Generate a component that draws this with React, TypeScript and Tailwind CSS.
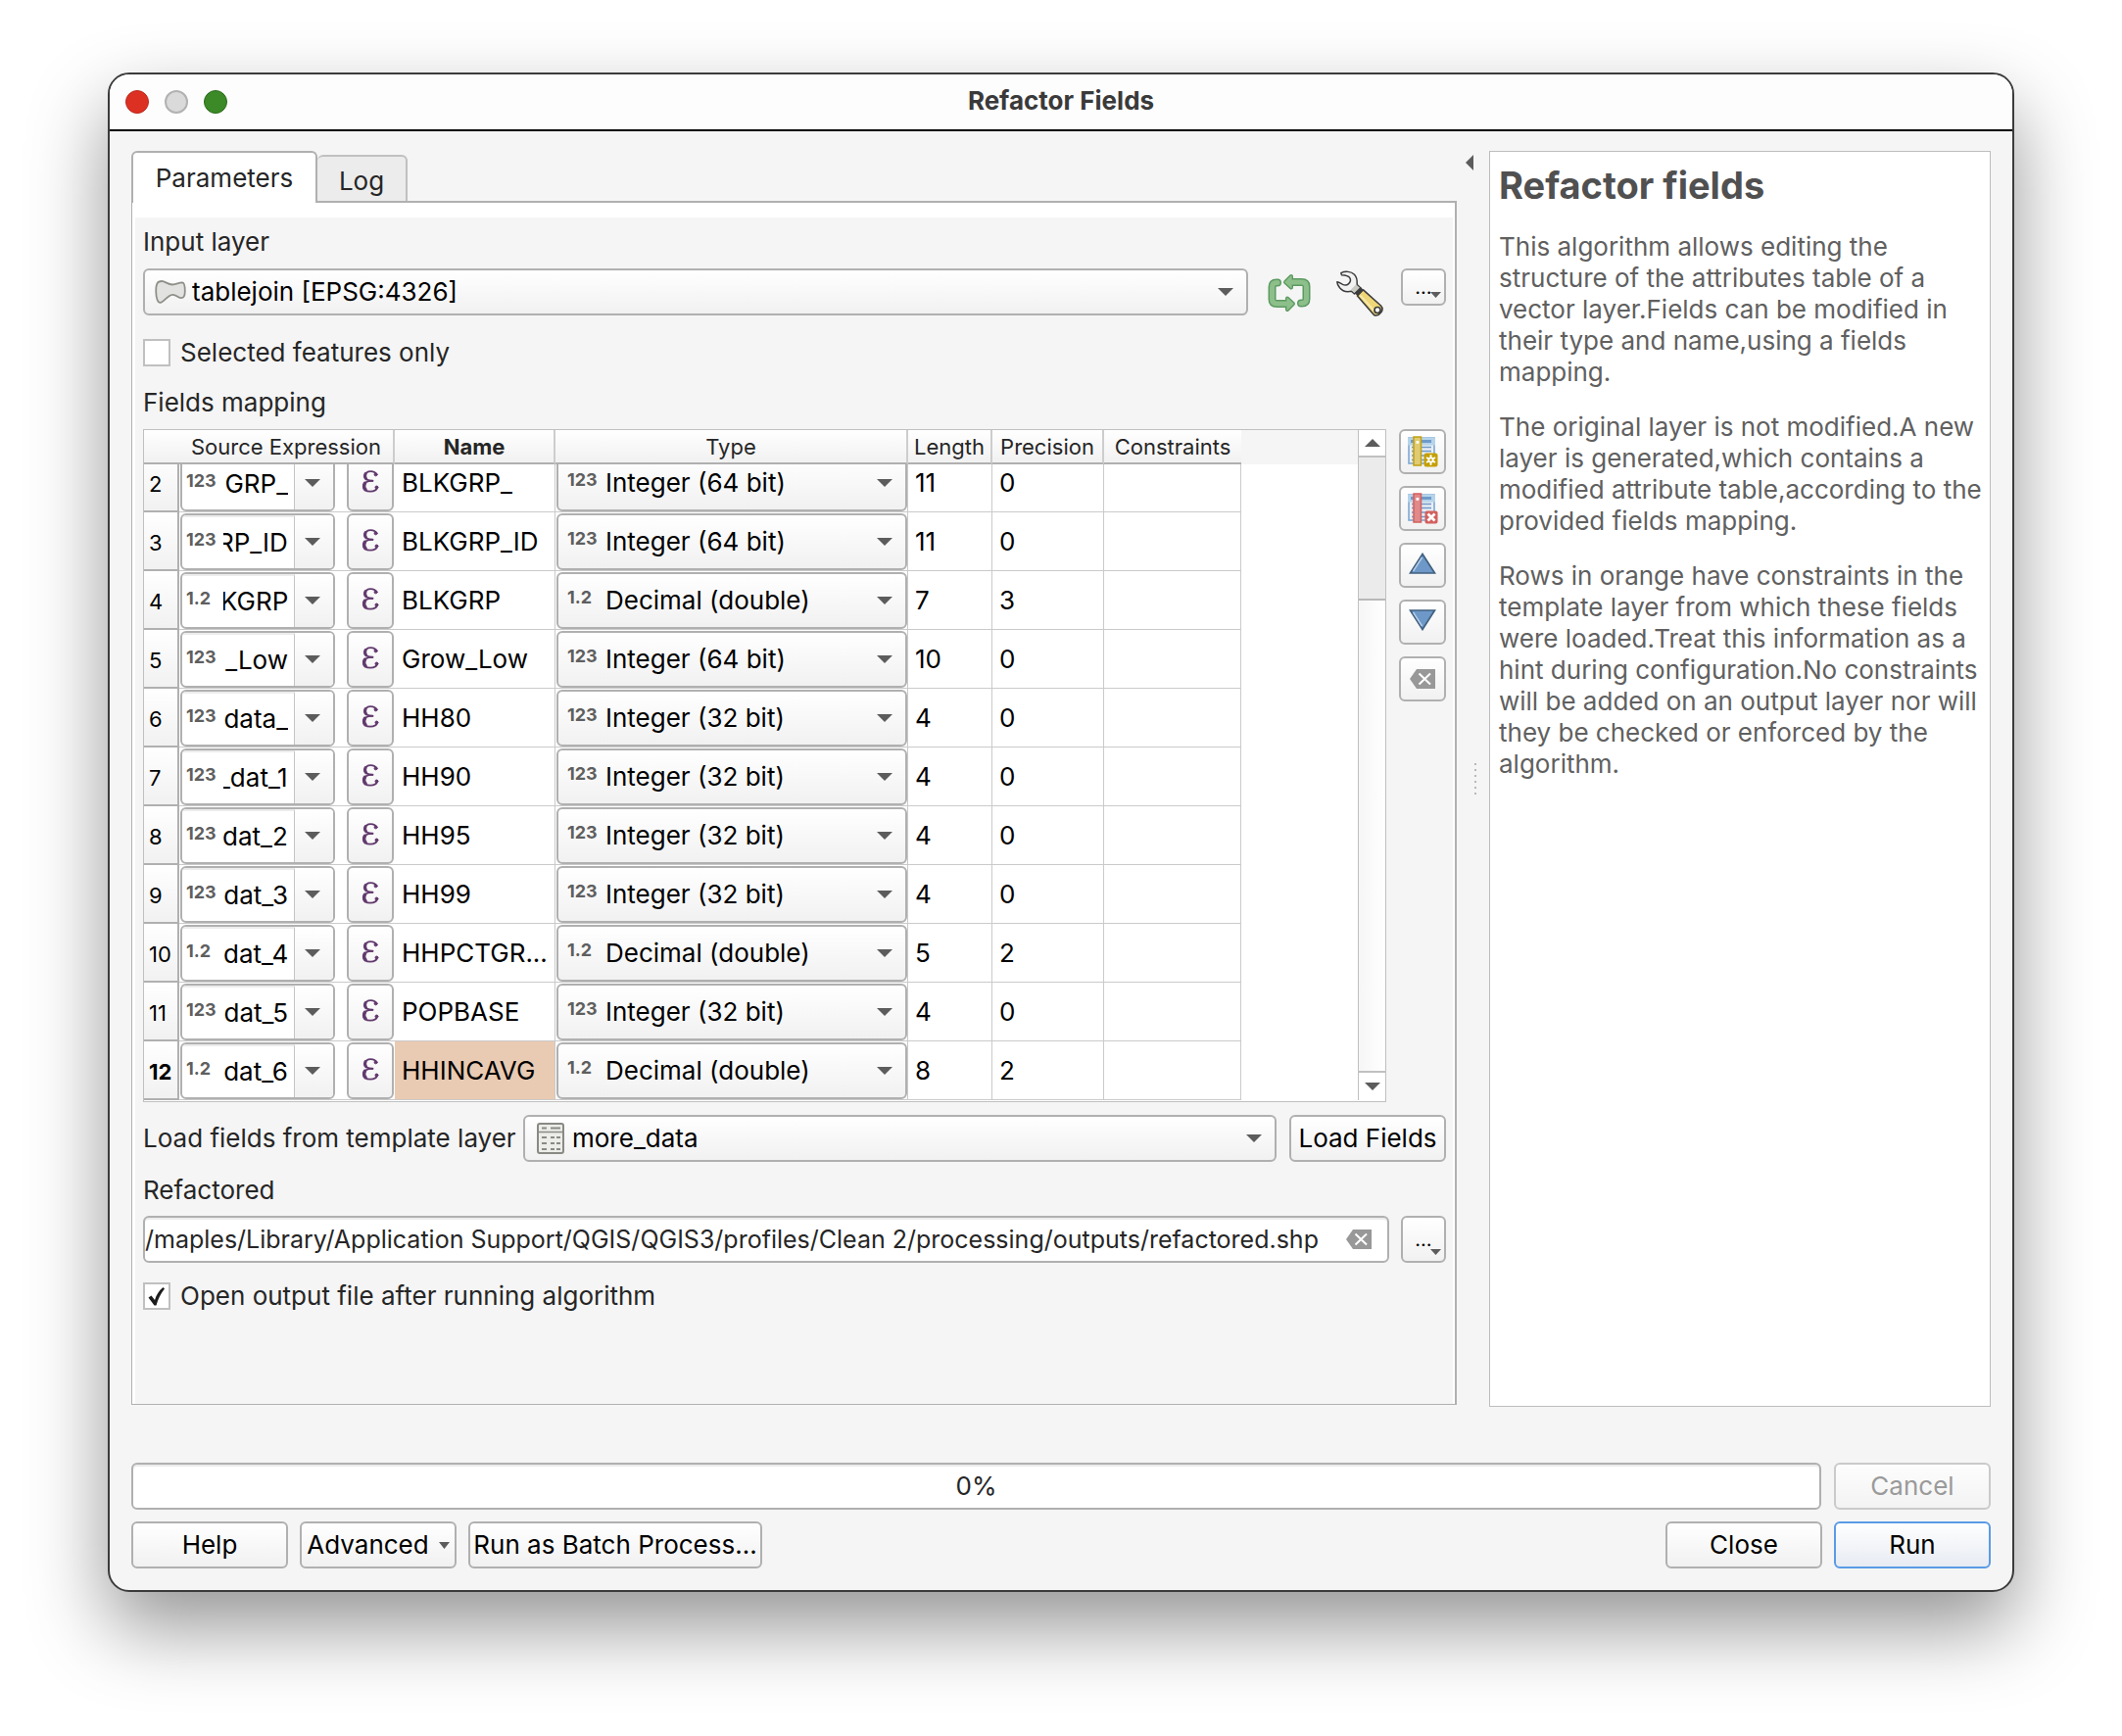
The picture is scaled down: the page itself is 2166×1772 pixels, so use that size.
import { useLayoutEffect, useRef, type ReactNode } from "react";

type Row = {
  n: number;
  kind: "123" | "1.2";
  source: string;
  name: string;
  type: string;
  length: string;
  precision: string;
  active?: boolean;
};

const INT64 = "Integer (64 bit)";
const INT32 = "Integer (32 bit)";
const DOUBLE = "Decimal (double)";

const rows: Row[] = [
  { n: 2, kind: "123", source: "GRP_", name: "BLKGRP_", type: INT64, length: "11", precision: "0" },
  { n: 3, kind: "123", source: "RP_ID", name: "BLKGRP_ID", type: INT64, length: "11", precision: "0" },
  { n: 4, kind: "1.2", source: "KGRP", name: "BLKGRP", type: DOUBLE, length: "7", precision: "3" },
  { n: 5, kind: "123", source: "_Low", name: "Grow_Low", type: INT64, length: "10", precision: "0" },
  { n: 6, kind: "123", source: "data_", name: "HH80", type: INT32, length: "4", precision: "0" },
  { n: 7, kind: "123", source: "_dat_1", name: "HH90", type: INT32, length: "4", precision: "0" },
  { n: 8, kind: "123", source: "dat_2", name: "HH95", type: INT32, length: "4", precision: "0" },
  { n: 9, kind: "123", source: "dat_3", name: "HH99", type: INT32, length: "4", precision: "0" },
  { n: 10, kind: "1.2", source: "dat_4", name: "HHPCTGR...", type: DOUBLE, length: "5", precision: "2" },
  { n: 11, kind: "123", source: "dat_5", name: "POPBASE", type: INT32, length: "4", precision: "0" },
  { n: 12, kind: "1.2", source: "dat_6", name: "HHINCAVG", type: DOUBLE, length: "8", precision: "2", active: true },
];

const box = "rounded-md border-2 border-[#b0b0b0] bg-linear-to-b from-white to-[#f1f1f1]";

function Arrow({ className = "h-2 w-4" }: { className?: string }) {
  return (
    <svg viewBox="0 0 16 8" preserveAspectRatio="none" className={`shrink-0 ${className}`} aria-hidden="true">
      <path d="M0 0H16L8 8Z" fill="#5c5c5c" />
    </svg>
  );
}

function PolygonIcon() {
  return (
    <svg viewBox="0 0 32 24" className="h-6 w-8 shrink-0" aria-hidden="true">
      <path
        d="M1.200 11C1.200 4 2.500 1 7 1C11 1 13 4.500 18 4.500C22 4.500 24 2.500 28 2.300C30.500 2.300 30.800 6 30.800 11C30.800 16 30 18.200 27 18.200C24 18.200 22 14.500 18 14.800C13 15.300 10.500 21 6.500 22.700C3 24 1.200 18 1.200 11Z"
        fill="#e2e2e0"
        stroke="#8f8f8a"
        strokeWidth="1.800"
      />
    </svg>
  );
}

function TableIcon() {
  return (
    <svg viewBox="0 0 28 32" className="h-8 w-7 shrink-0" fill="none" stroke="#8a8a85" aria-hidden="true">
      <rect x="1" y="1" width="26" height="30" rx="2" fill="#ecece9" strokeWidth="2" />
      <path d="M1 9.500H27" strokeWidth="1.500" />
      <path d="M5 5.500H10M14 5.500H24M5 15H10M14 15H18M20 15H24M5 21H10M14 21H18M20 21H24M5 27H10M14 27H18M20 27H24" strokeWidth="1.800" />
    </svg>
  );
}

function RefreshIcon() {
  const half = (
    <>
      <path d="M10 9.500H9Q4.500 9.500 4.500 14V26.500Q4.500 31 9.500 31H22" stroke="#5b9a60" strokeWidth="8" strokeLinejoin="round" strokeLinecap="round" />
      <path d="M20 25.500L26 31L20 37Z" fill="#5b9a60" stroke="#5b9a60" strokeWidth="4" strokeLinejoin="round" />
      <path d="M10 9.500H9Q4.500 9.500 4.500 14V26.500Q4.500 31 9.500 31H22" stroke="#8dbf8b" strokeWidth="5" strokeLinejoin="round" strokeLinecap="round" />
      <path d="M20 25.500L26 31L20 37Z" fill="#8dbf8b" stroke="#8dbf8b" strokeWidth="1.200" strokeLinejoin="round" />
    </>
  );
  return (
    <svg viewBox="0 0 44 40" className="h-10 w-11" fill="none" aria-hidden="true">
      {half}
      <g transform="rotate(180 22 20)">{half}</g>
    </svg>
  );
}

function WrenchIcon() {
  return (
    <svg viewBox="0 0 48 48" className="size-12" aria-hidden="true">
      <path
        d="M4.800 2.600C9 .6 15 .8 18.500 4.200C21.500 7.200 21.400 11 21.200 14.500L25.500 18.500L18.500 24L15.500 21.300C11 22.300 6 21 3.500 17.800C1.800 15.500 .8 13.500 .8 11.800C3 12 4.500 13.400 6.500 14.400C8.500 15.300 11 15.200 12.600 13.600C14.500 11.800 15 9.500 13.600 7.400C12 5.200 8.500 5 5.500 4.800Z"
        fill="#f2f2f2"
        stroke="#3c3c3c"
        strokeWidth="1.500"
        strokeLinejoin="round"
      />
      <path d="M15 19.500L20 14.500L24 18L18.500 23Z" fill="#c9c9c4" />
      <path d="M24.500 17L27.500 19.800L21.500 26L18.500 23Z" fill="#3c3c3c" />
      <path
        d="M27.500 19.800L45.500 36Q48.500 39.500 45.500 43Q42.500 47.200 38.500 45.500L21.500 26Z"
        fill="#efd779"
        stroke="#3c3c3c"
        strokeWidth="1.600"
        strokeLinejoin="round"
      />
      <path d="M24.500 25.500L39 41.500" stroke="#f8eab0" strokeWidth="1.800" />
      <circle cx="42" cy="40.500" r="3" fill="#fff" stroke="#3c3c3c" strokeWidth="1.700" />
    </svg>
  );
}

function FieldIcon({ ruler, edge, children }: { ruler: string; edge: string; children: ReactNode }) {
  return (
    <svg viewBox="0 0 31 32" className="h-8 w-[31px]" aria-hidden="true">
      <rect x="1" y="2" width="26" height="26" fill="#e9edf3" stroke="#7fa8d4" strokeWidth="1.600" />
      <rect x="0" y="1.500" width="28" height="8" fill="#b5d4ea" />
      <path d="M3 5.500H24" stroke="#6f9bcb" strokeWidth="3" />
      <path d="M4 11.500H24M4 15.500H24M4 20H24M4 24.500H24" stroke="#6f9bcb" strokeWidth="1.300" />
      <rect x="6" y="1" width="7.500" height="29" fill={ruler} stroke={edge} strokeWidth="1.500" />
      <rect x="8.500" y="5" width="2.800" height="2.800" fill="#fff" />
      {children}
    </svg>
  );
}

function AddFieldIcon() {
  return (
    <FieldIcon ruler="#e0cb72" edge="#c0a010">
      <rect x="16.500" y="17.500" width="14" height="14" rx="2.500" fill="#c4a000" />
      <path d="M23.500 19.300V29.700M19 22L28 27M19 27L28 22" stroke="#fff" strokeWidth="1.900" />
      <circle cx="23.500" cy="24.500" r="3" fill="#fff" />
      <circle cx="23.500" cy="24.500" r="1.200" fill="#c4a000" />
    </FieldIcon>
  );
}

function RemoveFieldIcon() {
  return (
    <FieldIcon ruler="#e08a8a" edge="#d35f5f">
      <rect x="17.500" y="18.500" width="13" height="13" rx="2" fill="#d35f5f" />
      <path d="M20.500 21.500L27.500 28.500M27.500 21.500L20.500 28.500" stroke="#fff" strokeWidth="2.800" />
    </FieldIcon>
  );
}

function TriangleIcon({ down = false }: { down?: boolean }) {
  return (
    <svg viewBox="0 0 28 22" className="mb-1 h-[22px] w-7" aria-hidden="true">
      <path
        d={down ? "M1.500 1H26.500L14 20.500Z" : "M1.500 21H26.500L14 1.500Z"}
        fill="#6d98c8"
        stroke="#40607f"
        strokeWidth="1.700"
      />
      <path d={down ? "M4.500 3L13.500 17" : "M4.500 19L13.500 5"} stroke="#b6cfe8" strokeWidth="1.400" />
    </svg>
  );
}

function ClearIcon() {
  return (
    <svg viewBox="0 0 26 20" className="h-5 w-[26px]" aria-hidden="true">
      <path d="M0 10L7 0H26V20H7Z" fill="#989898" />
      <path d="M9.500 4.500L21 15.500M21 4.500L9.500 15.500" stroke="#fff" strokeWidth="2" />
    </svg>
  );
}

function EpsilonIcon() {
  return (
    <svg viewBox="0 0 18 24" className="mb-1 h-[23px] w-[18px]" fill="none" stroke="#623a6e" strokeLinecap="round" aria-hidden="true">
      <path d="M15.500 4.500C14.500 2 12 1.200 9.500 1.200C6 1.200 3 3 3 6.300C3 9.500 6 11.200 11.500 11.200" strokeWidth="1.900" />
      <path d="M11.500 11.300C5 11.300 1.800 13.500 1.800 17C1.800 20.800 5 22.600 9 22.600C12.500 22.600 15.800 21.500 16.500 18" strokeWidth="1.900" />
      <path d="M3.900 3.800C3.100 5.500 3.200 7.600 4.400 9" strokeWidth="3.200" />
      <path d="M3.200 14C2.100 16 2.300 18.800 3.700 20.500" strokeWidth="3.600" />
      <circle cx="14.800" cy="4.500" r="1.600" fill="#623a6e" />
      <circle cx="15.700" cy="18.200" r="1.500" fill="#623a6e" />
    </svg>
  );
}

function KindTag({ kind, className }: { kind: string; className: string }) {
  return <span className={`shrink-0 pb-1.5 text-[18px] leading-6 font-bold text-[#5f5f5f] ${className}`}>{kind}</span>;
}

function SourceCell({ row }: { row: Row }) {
  const input = useRef<HTMLInputElement>(null);
  useLayoutEffect(() => {
    if (input.current) input.current.scrollLeft = input.current.scrollWidth;
  }, []);
  return (
    <div className="flex gap-3 pl-px">
      <div className="flex h-[58px] w-[158px] overflow-hidden rounded-md border-2 border-[#b0b0b0] bg-white">
        <div className="flex w-[115px] items-center border-t-2 border-r border-t-[#ececec] border-r-[#c4c4c4] pr-1.5 pl-1">
          <KindTag kind={row.kind} className="w-[38px]" />
          <input
            ref={input}
            aria-label={`Source expression ${row.n}`}
            defaultValue={row.source}
            className="w-full min-w-0 text-right text-[26px] leading-8 text-black outline-none"
          />
        </div>
        <button
          type="button"
          aria-label="Choose source field"
          className="flex flex-1 items-center justify-center bg-linear-to-b from-white to-[#f1f1f1] pr-1"
        >
          <Arrow />
        </button>
      </div>
      <button type="button" aria-label="Expression editor" className={`flex h-[58px] w-12 items-center justify-center ${box}`}>
        <EpsilonIcon />
      </button>
    </div>
  );
}

function FieldsTable() {
  const view = useRef<HTMLDivElement>(null);
  useLayoutEffect(() => {
    if (view.current) view.current.scrollTop = 11;
  }, []);
  const th =
    "sticky top-0 z-10 h-[35px] border-b-2 border-b-[#b0b0b0] bg-linear-to-b from-white to-[#f1f1f1] p-0 text-center text-[22px] leading-7 font-normal text-[#262626]";
  const thLine = "border-r-2 border-r-[#cdcdcd]";
  const td = "h-[60px] border-r border-b border-[#cacaca] p-0 pl-[7px] text-left text-[26px] leading-8 text-black";
  return (
    <div className="flex min-w-0 flex-1 border border-[#c0c0c0] bg-white pb-px">
      <div ref={view} className="h-[684px] min-w-0 flex-1 overflow-hidden bg-white">
        <table className="w-full table-fixed border-separate border-spacing-0">
          <colgroup>
            <col className="w-9" />
            <col className="w-[220px]" />
            <col className="w-[164px]" />
            <col className="w-[360px]" />
            <col className="w-[86px]" />
            <col className="w-[114px]" />
            <col className="w-[140px]" />
            <col />
          </colgroup>
          <thead>
            <tr>
              <td className={th} />
              <th scope="col" className={`${th} ${thLine}`}>Source Expression</th>
              <th scope="col" className={`${th} ${thLine}`}><b className="font-bold">Name</b></th>
              <th scope="col" className={`${th} ${thLine}`}>Type</th>
              <th scope="col" className={`${th} ${thLine}`}>Length</th>
              <th scope="col" className={`${th} ${thLine}`}>Precision</th>
              <th scope="col" className={th}>Constraints</th>
              <td className="sticky top-0 z-10 bg-[#f5f5f5] p-0" />
            </tr>
          </thead>
          <tbody>
            {rows.map((row) => (
              <tr key={row.n}>
                <th
                  scope="row"
                  className={`h-[60px] border-r-2 border-b-2 border-[#b0b0b0] bg-linear-to-b from-white to-[#f1f1f1] p-0 pt-1 pl-[5px] text-left text-[22px] leading-7 text-black ${row.active ? "font-bold" : "font-normal"}`}
                >
                  {row.n}
                </th>
                <td className="h-[60px] border-b border-[#cacaca] p-0 pt-px align-top">
                  <SourceCell row={row} />
                </td>
                <td className={`${td} ${row.active ? "bg-[#e9cab2]" : ""}`}>{row.name}</td>
                <td className="h-[60px] border-r border-b border-[#cacaca] p-0 pt-px pl-px align-top">
                  <div className={`flex h-[58px] items-center pr-[13px] pl-[9px] ${box}`}>
                    <KindTag kind={row.kind} className="w-[39px]" />
                    <select
                      aria-label={`Type of ${row.name}`}
                      className="min-w-0 flex-1 appearance-none text-[26px] leading-8 text-black outline-none"
                    >
                      <option>{row.type}</option>
                    </select>
                    <Arrow />
                  </div>
                </td>
                <td className={td}>{row.length}</td>
                <td className={td}>{row.precision}</td>
                <td className={td} />
                <td className="p-0" />
              </tr>
            ))}
          </tbody>
        </table>
      </div>
      <div className="flex w-7 flex-col border-l border-[#c0c0c0] bg-linear-to-r from-[#f6f6f6] to-white">
        <button type="button" aria-label="Scroll up" className="flex h-7 items-center justify-center border-b-2 border-[#c0c0c0] bg-white">
          <Arrow className="h-2 w-4 rotate-180" />
        </button>
        <div className="h-[146px] border-b-2 border-[#b8b8b8] bg-[#ebebeb]" />
        <div className="flex-1" />
        <button type="button" aria-label="Scroll down" className="flex h-[30px] items-center justify-center border-t-2 border-[#c0c0c0] bg-white">
          <Arrow />
        </button>
      </div>
    </div>
  );
}

function SideButton({ label, children }: { label: string; children: ReactNode }) {
  return (
    <button type="button" aria-label={label} className={`flex h-[46px] w-12 items-center justify-center ${box}`}>
      {children}
    </button>
  );
}

function PushButton({ className, children }: { className: string; children: ReactNode }) {
  return (
    <button
      type="button"
      className={`flex h-12 shrink-0 items-center justify-center whitespace-nowrap text-[26px] leading-8 text-black ${className}`}
    >
      {children}
    </button>
  );
}

function CheckRow({ id, label, checked, className }: { id: string; label: string; checked: boolean; className: string }) {
  return (
    <div className={`flex h-7 items-center gap-2.5 ${className}`}>
      <span className="relative flex size-7">
        <input
          id={id}
          type="checkbox"
          defaultChecked={checked}
          className="peer size-7 appearance-none border-2 border-[#c0c0c0] bg-white"
        />
        <svg viewBox="0 0 28 28" className="pointer-events-none absolute inset-0 hidden size-7 peer-checked:block" aria-hidden="true">
          <path d="M5.500 15.500L8.500 13.500L12 18C13.500 13 16 8.500 20.500 5L22 6.500C18 11.500 15.500 16.500 13.500 23.500H11.500Z" fill="#1c1c1c" />
        </svg>
      </span>
      <label htmlFor={id} className="text-[26px] leading-8">{label}</label>
    </div>
  );
}

export default function App() {
  return (
    <div className="min-h-screen bg-white px-[110px] pt-[74px] pb-[146px] font-[Inter,sans-serif] text-[26px] leading-8 text-[#262626]">
      <main className="overflow-hidden rounded-[22px] border-2 border-[#3b3b3b] bg-[#f5f5f5] shadow-[0_36px_80px_rgba(0,0,0,0.42)]">
        <header className="grid h-[58px] grid-cols-[1fr_auto_1fr] items-center border-b-2 border-black bg-[#fdfdfd] px-4">
          <div className="flex gap-4">
            <button type="button" aria-label="Close window" className="size-6 rounded-full border border-[#b92a1e] bg-[#dc3022]" />
            <button type="button" aria-label="Minimize window" className="size-6 rounded-full border-2 border-[#b2b2b2] bg-[#dadada]" />
            <button type="button" aria-label="Zoom window" className="size-6 rounded-full border border-[#2c6a1b] bg-[#3c8927]" />
          </div>
          <h1 className="pb-0.5 text-[26px] leading-8 font-bold text-[#3a3a3a]">Refactor Fields</h1>
        </header>

        <div className="px-[22px] pt-5 pb-[22px]">
          <div className="flex">
            <section className="flex min-w-0 flex-1 flex-col pb-[2px]">
              <div role="tablist" className="relative z-10 -mb-[2px] flex items-end">
                <button
                  type="button"
                  role="tab"
                  aria-selected="true"
                  className="h-[53px] w-[190px] rounded-t-md border-2 border-b-0 border-[#b0b0b0] bg-white text-[26px] leading-8"
                >
                  Parameters
                </button>
                <button
                  type="button"
                  role="tab"
                  aria-selected="false"
                  className="mb-[2px] h-[47px] w-[92px] rounded-t-md border-2 border-b-0 border-l-0 border-[#c0c0c0] bg-[#ececec] pt-1 text-[26px] leading-8"
                >
                  Log
                </button>
              </div>

              <div role="tabpanel" className="flex-1 border border-t-2 border-r-2 border-[#b0b0b0] bg-white pt-[15px] pr-[2px] pl-[3px]">
                <div className="bg-[#f5f5f5] pt-[9px] pr-[7px] pb-24 pl-2">
                  <label htmlFor="input-layer" className="block">Input layer</label>
                  <div className="mt-[11px] flex h-12 items-start">
                    <div className={`flex h-12 min-w-0 flex-1 items-center pr-[13px] pl-2.5 ${box}`}>
                      <PolygonIcon />
                      <select id="input-layer" className="ml-1.5 min-w-0 flex-1 appearance-none text-[26px] leading-8 text-black outline-none">
                        <option>tablejoin [EPSG:4326]</option>
                      </select>
                      <Arrow />
                    </div>
                    <button type="button" aria-label="Iterate over this layer" className="mt-[5px] ml-5"><RefreshIcon /></button>
                    <button type="button" aria-label="Advanced options" className="mt-[2px] ml-[26px]"><WrenchIcon /></button>
                    <button type="button" aria-label="Browse input" className={`relative ml-[18px] h-[38px] w-[46px] text-[20px] leading-8 text-black ${box}`}>
                      …
                      <Arrow className="absolute right-[3px] bottom-[6px] h-[6px] w-[11px]" />
                    </button>
                  </div>

                  <CheckRow id="selected-only" label="Selected features only" checked={false} className="mt-6" />

                  <h2 className="mt-[21px]">Fields mapping</h2>
                  <div className="mt-[11px] flex gap-[13px]">
                    <FieldsTable />
                    <div className="flex flex-col gap-3">
                      <SideButton label="Add new field"><AddFieldIcon /></SideButton>
                      <SideButton label="Delete selected field"><RemoveFieldIcon /></SideButton>
                      <SideButton label="Move field up"><TriangleIcon /></SideButton>
                      <SideButton label="Move field down"><TriangleIcon down /></SideButton>
                      <SideButton label="Reset all fields"><ClearIcon /></SideButton>
                    </div>
                  </div>

                  <div className="mt-[13px] flex items-center">
                    <label htmlFor="template-layer" className="w-[388px] shrink-0 whitespace-nowrap text-[26px]">
                      Load fields from template layer
                    </label>
                    <div className={`flex h-12 min-w-0 flex-1 items-center pr-[13px] pl-3 ${box}`}>
                      <TableIcon />
                      <select id="template-layer" className="ml-2 min-w-0 flex-1 appearance-none text-[26px] leading-8 text-black outline-none">
                        <option>more_data</option>
                      </select>
                      <Arrow />
                    </div>
                    <PushButton className={`ml-[13px] w-40 ${box}`}>Load Fields</PushButton>
                  </div>

                  <label htmlFor="output-path" className="mt-[13px] block">Refactored</label>
                  <div className="mt-2.5 flex gap-3">
                    <div className="flex h-12 min-w-0 flex-1 items-center rounded-md border-2 border-[#b0b0b0] bg-white pr-4 shadow-[inset_0_2px_0_#ececec]">
                      <input
                        id="output-path"
                        defaultValue="/maples/Library/Application Support/QGIS/QGIS3/profiles/Clean 2/processing/outputs/refactored.shp"
                        className="min-w-0 flex-1 text-[25px] leading-8 outline-none"
                      />
                      <button type="button" aria-label="Clear output path"><ClearIcon /></button>
                    </div>
                    <button type="button" aria-label="Browse output" className={`relative h-12 w-[46px] text-[20px] leading-8 text-black ${box}`}>
                      …
                      <Arrow className="absolute right-[3px] bottom-[6px] h-[6px] w-[11px]" />
                    </button>
                  </div>

                  <CheckRow id="open-output" label="Open output file after running algorithm" checked className="mt-5" />
                </div>
              </div>
            </section>

            <div className="grid w-[33px] grid-rows-[1fr_auto_1fr] justify-items-center">
              <button type="button" aria-label="Hide help" className="mt-1 h-4 w-4 self-start pr-1">
                <svg viewBox="0 0 8 16" className="h-4 w-2" aria-hidden="true">
                  <path d="M8 0V16L0 8Z" fill="#5c5c5c" />
                </svg>
              </button>
              <div className="grid gap-1 pl-1">
                {[0, 1, 2, 3, 4, 5].map((i) => (
                  <span key={i} className="size-[2px] bg-[#b8b8b8]" />
                ))}
              </div>
            </div>

            <aside className="w-[512px] shrink-0 border border-[#bdbdbd] bg-white pt-[9px] pr-1.5 pl-[9px] text-[#606060]">
              <h2 className="text-[38px] leading-[50px] font-bold text-[#505050]">Refactor fields</h2>
              <div className="mt-[22px] grid gap-6">
                <p>
                  This algorithm allows editing the structure of the attributes table of a vector layer.Fields can be
                  modified in their type and name,using a fields mapping.
                </p>
                <p>
                  The original layer is not modified.A new layer is generated,which contains a modified attribute
                  table,according to the provided fields mapping.
                </p>
                <p>
                  Rows in orange have constraints in the template layer from which these fields were loaded.Treat this
                  information as a hint during configuration.No constraints will be added on an output layer nor will
                  they be checked or enforced by the algorithm.
                </p>
              </div>
            </aside>
          </div>

          <div className="mt-[57px] flex gap-[13px]">
            <div
              role="progressbar"
              aria-valuenow={0}
              aria-label="Progress"
              className="flex h-12 flex-1 items-center justify-center rounded-md border-2 border-[#b0b0b0] bg-white shadow-[inset_0_2px_0_#ececec]"
            >
              0%
            </div>
            <PushButton className="w-40 rounded-md border-2 border-[#cacaca] bg-linear-to-b from-[#fdfdfd] to-[#f3f3f3]">
              <span className="text-[#9a9a9a]">Cancel</span>
            </PushButton>
          </div>

          <div className="mt-3 flex gap-3">
            <PushButton className={`w-40 ${box}`}>Help</PushButton>
            <PushButton className={`w-40 gap-2.5 ${box}`}>
              Advanced
              <Arrow className="h-[7px] w-[11px]" />
            </PushButton>
            <PushButton className={`w-[300px] ${box}`}>Run as Batch Process...</PushButton>
            <PushButton className={`ml-auto w-40 ${box}`}>Close</PushButton>
            <PushButton className="w-40 rounded-md border-2 border-[#5a9be6] bg-linear-to-b from-white to-[#e7ebf2]">Run</PushButton>
          </div>
        </div>
      </main>
    </div>
  );
}
